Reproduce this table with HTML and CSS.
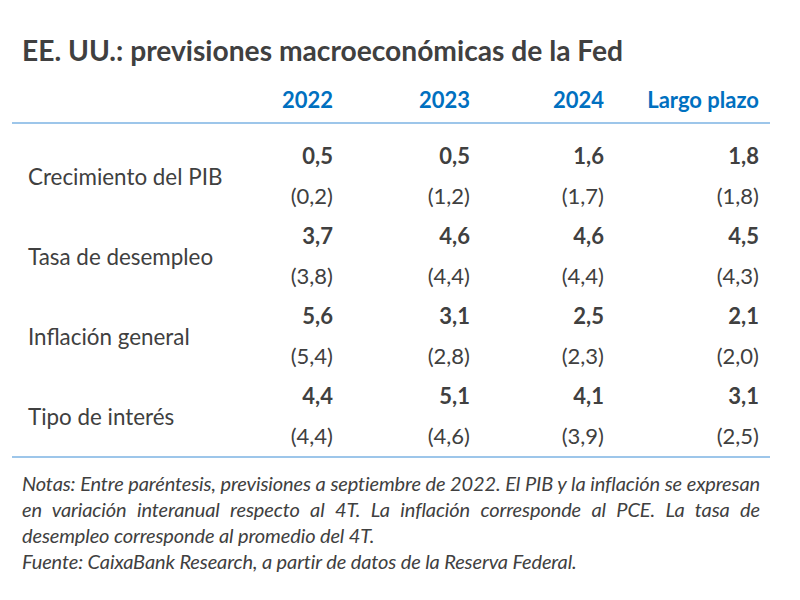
FILE: index.html
```html
<!DOCTYPE html>
<html lang="es">
<head>
<meta charset="utf-8">
<title>EE. UU.: previsiones macroeconómicas de la Fed</title>
<link rel="stylesheet" href="styles.css">
</head>
<body>
<div class="page">
  <h1 class="title">EE. UU.: previsiones macroeconómicas de la Fed</h1>
  <div class="table">
    <div class="head">
      <span></span>
      <span class="col">2022</span>
      <span class="col">2023</span>
      <span class="col">2024</span>
      <span class="col">Largo plazo</span>
    </div>
    <div class="body">
      <div class="group">
        <div class="label">Crecimiento del PIB</div>
        <div class="v b">0,5</div><div class="v b">0,5</div><div class="v b">1,6</div><div class="v b">1,8</div>
        <div class="v">(0,2)</div><div class="v">(1,2)</div><div class="v">(1,7)</div><div class="v">(1,8)</div>
      </div>
      <div class="group">
        <div class="label">Tasa de desempleo</div>
        <div class="v b">3,7</div><div class="v b">4,6</div><div class="v b">4,6</div><div class="v b">4,5</div>
        <div class="v">(3,8)</div><div class="v">(4,4)</div><div class="v">(4,4)</div><div class="v">(4,3)</div>
      </div>
      <div class="group">
        <div class="label">Inflación general</div>
        <div class="v b">5,6</div><div class="v b">3,1</div><div class="v b">2,5</div><div class="v b">2,1</div>
        <div class="v">(5,4)</div><div class="v">(2,8)</div><div class="v">(2,3)</div><div class="v">(2,0)</div>
      </div>
      <div class="group">
        <div class="label">Tipo de interés</div>
        <div class="v b">4,4</div><div class="v b">5,1</div><div class="v b">4,1</div><div class="v b">3,1</div>
        <div class="v">(4,4)</div><div class="v">(4,6)</div><div class="v">(3,9)</div><div class="v">(2,5)</div>
      </div>
    </div>
  </div>
  <div class="notes">
    <p class="note">
      <span class="line full">Notas: Entre paréntesis, previsiones a septiembre de 2022. El PIB y la inflación se expresan</span>
      <span class="line full">en variación interanual respecto al 4T. La inflación corresponde al PCE. La tasa de</span>
      <span class="line">desempleo corresponde al promedio del 4T.</span>
    </p>
    <p class="note">Fuente: CaixaBank Research, a partir de datos de la Reserva Federal.</p>
  </div>
</div>
</body>
</html>
```

FILE: styles.css
```css
html, body {
  margin: 0;
  padding: 0;
  background: #ffffff;
}

body {
  font-family: "Lato", "Open Sans", "Liberation Sans", sans-serif;
  color: #404040;
}

.page {
  width: 800px;
  height: 600px;
  padding-top: 30px;
  box-sizing: border-box;
}

.title {
  margin: 0 0 15px 22px;
  font-size: 28.2px;
  line-height: 40px;
  font-weight: 700;
  color: #404040;
}

.table {
  margin-left: 12px;
  width: 758px;
}

.head,
.group {
  display: grid;
  grid-template-columns: 200px 121px 137px 134px 155px;
}

.head {
  height: 30px;
  line-height: 30px;
  padding-bottom: 7px;
  border-bottom: 2px solid #9dc6ea;
  font-size: 22px;
  font-weight: 700;
  color: #0070c0;
}

.col {
  text-align: right;
}

.body {
  padding-top: 12px;
  border-bottom: 2px solid #9dc6ea;
}

.group {
  grid-template-rows: 40px 40px;
  font-size: 22px;
}

.label {
  grid-row: 1 / 3;
  grid-column: 1;
  align-self: center;
  padding-left: 16px;
  font-size: 22.4px;
  white-space: nowrap;
}

.v {
  text-align: right;
  line-height: 40px;
}

.b {
  font-weight: 700;
}

.notes {
  margin: 12px 0 0 22px;
  width: 738px;
  font-size: 20px;
  letter-spacing: -0.12px;
  font-style: italic;
  line-height: 26px;
}

.note {
  margin: 0;
}

.line {
  display: block;
  white-space: nowrap;
}

.line.full {
  text-align: justify;
  text-align-last: justify;
}
```
